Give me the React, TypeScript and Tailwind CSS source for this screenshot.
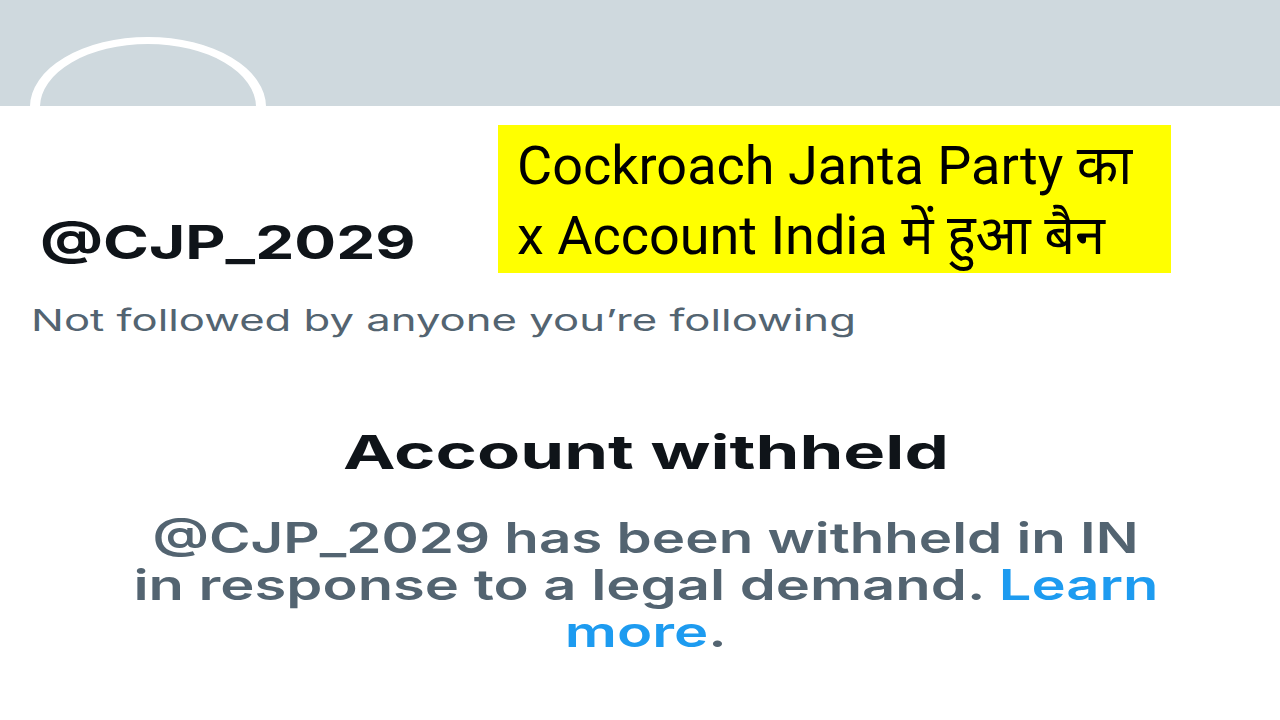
import React from "react";

const chirp = { fontFamily: "Inter, 'Noto Sans', sans-serif" };

const App = () => {
  return (
    <div className="relative w-full h-[720px] overflow-hidden bg-white" style={chirp}>
      {/* banner with the avatar ring peeking out */}
      <div className="relative h-[106px] overflow-hidden bg-[#cfd9de]">
        <div className="absolute left-[30px] top-[37px] h-[140px] w-[236px] rounded-[50%] border-x-[10px] border-y-[7px] border-white" />
      </div>

      <div className="px-[40px]">
        <div className="mt-[108px] h-[56px] origin-left scale-x-[1.35] text-[46px] font-bold leading-[56px] text-[#0f1419]">
          @CJP_2029
        </div>
        <div className="-ml-[9px] mt-[32px] h-[36px] origin-left scale-x-[1.455] text-[30px] leading-[36px] text-[#536471]">
          Not followed by anyone you’re following
        </div>
      </div>

      <div className="mt-[86px] flex flex-col items-center pl-[12px]">
        <div className="h-[56px] scale-x-[1.5] text-[47px] font-bold leading-[56px] text-[#0f1419]">
          Account withheld
        </div>
        <div className="mt-[34px] flex flex-col items-center text-[42px] font-semibold leading-[47px] text-[#536471]">
          <div className="scale-x-[1.345]">@CJP_2029 has been withheld in IN</div>
          <div className="scale-x-[1.378]">
            in response to a legal demand. <span className="text-[#1d9bf0]">Learn</span>
          </div>
          <div className="scale-x-[1.38]">
            <span className="text-[#1d9bf0]">more</span>.
          </div>
        </div>
      </div>

      {/* caption pasted over the screenshot */}
      <div
        className="absolute left-[498px] top-[125px] h-[148px] w-[673px] bg-[#ffff00] pl-[19px] pt-[6px] text-[54px] leading-[70px] text-black"
        style={{ fontFamily: "Roboto, 'Noto Sans', sans-serif" }}
      >
        <div>Cockroach Janta Party का</div>
        <div>x Account India में हुआ बैन</div>
      </div>
    </div>
  );
};

export default App;
